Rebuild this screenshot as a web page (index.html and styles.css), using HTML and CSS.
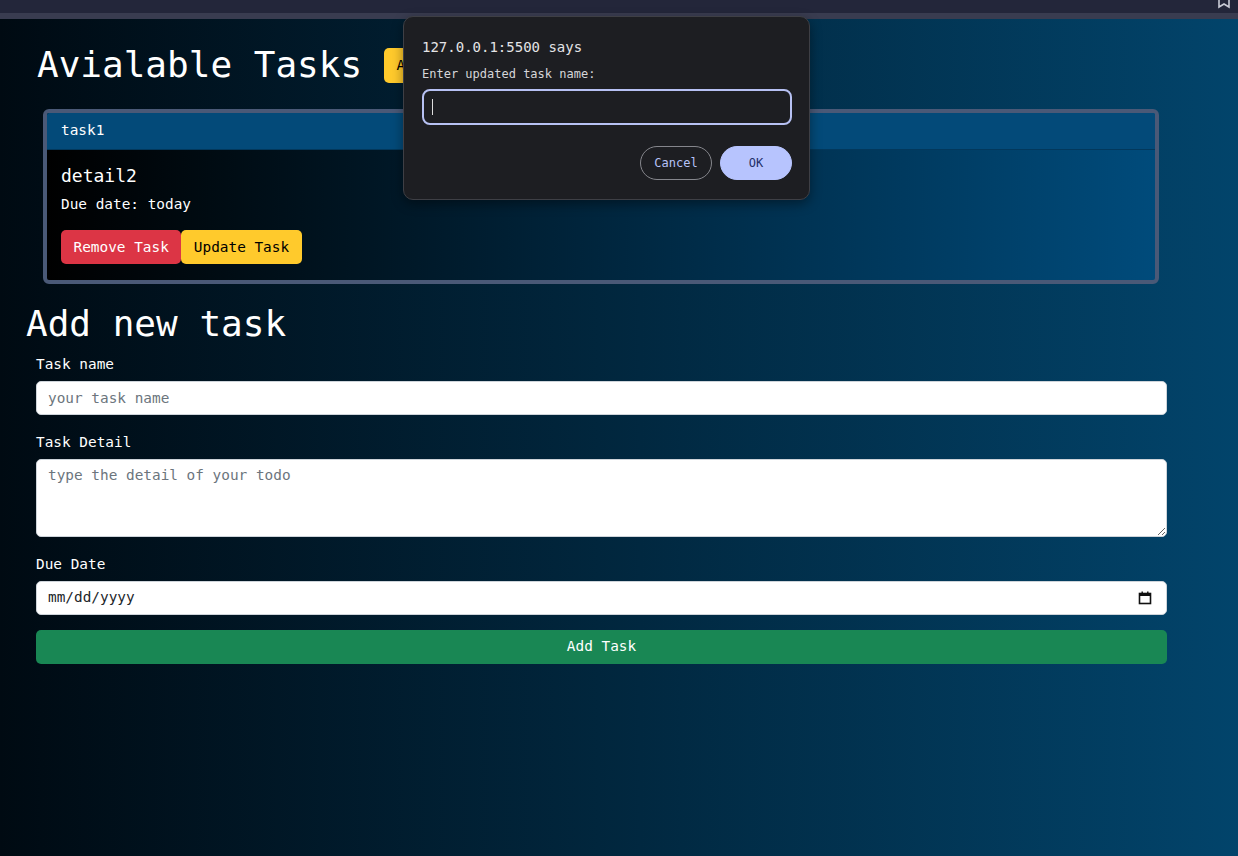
FILE: index.html
```html
<!DOCTYPE html>
<html lang="en">
<head>
<meta charset="utf-8">
<title>Todo</title>
<link rel="stylesheet" href="styles.css">
</head>
<body>
<div class="chrome">
  <div class="chrome-top">
    <svg class="star" width="14" height="12" viewBox="0 0 14 12"><path d="M2 0 L2 10 L7 7 L12 10 L12 0" fill="none" stroke="#c9cbd6" stroke-width="1.6"/></svg>
  </div>
  <div class="chrome-strip"></div>
</div>
<main class="page">
  <div class="title-row">
    <h1 class="title">Avialable Tasks</h1>
    <button class="btn btn-warning badge-btn">All Tasks</button>
  </div>

  <div class="task-card">
    <div class="task-header">task1</div>
    <div class="task-body">
      <h5 class="task-detail">detail2</h5>
      <p class="task-due">Due date: today</p>
      <div class="task-actions">
        <button class="btn btn-danger">Remove Task</button><button class="btn btn-warning">Update Task</button>
      </div>
    </div>
  </div>

  <h1 class="title form-title">Add new task</h1>
  <form class="task-form">
    <label class="label">Task name</label>
    <input class="field" type="text" placeholder="your task name">
    <label class="label">Task Detail</label>
    <textarea class="field area" placeholder="type the detail of your todo"></textarea>
    <label class="label">Due Date</label>
    <div class="field date-field">
      <span>mm/dd/yyyy</span>
      <svg width="14" height="14" viewBox="0 0 14 14"><rect x="1.5" y="2.5" width="11" height="10" fill="none" stroke="#111" stroke-width="1.6"/><rect x="1.5" y="2" width="11" height="3" fill="#111"/><rect x="3.5" y="0.5" width="1.4" height="2.5" fill="#111"/><rect x="9.1" y="0.5" width="1.4" height="2.5" fill="#111"/></svg>
    </div>
    <button type="button" class="btn btn-success add-btn">Add Task</button>
  </form>
</main>

<div class="dialog">
  <div class="dialog-title">127.0.0.1:5500 says</div>
  <div class="dialog-msg">Enter updated task name:</div>
  <div class="dialog-input"><span class="caret"></span></div>
  <div class="dialog-actions">
    <button class="dbtn dbtn-cancel">Cancel</button>
    <button class="dbtn dbtn-ok">OK</button>
  </div>
</div>
</body>
</html>
```

FILE: styles.css
```css
* { box-sizing: border-box; }
html, body { margin: 0; padding: 0; height: 100%; }
body {
  font-family: "DejaVu Sans Mono", "Liberation Mono", monospace;
  font-size: 14.4px;
  line-height: 1.5;
  color: #fff;
  background: linear-gradient(to right, #000a12, #02446b);
  position: relative;
  overflow: hidden;
}
.chrome { height: 19px; }
.chrome-top { height: 13px; background: #23263a; position: relative; }
.chrome-strip { height: 6px; background: #393c50; }
.star { position: absolute; right: 7px; top: -3px; }

.page { padding: 0; }
.title-row { display: flex; align-items: center; gap: 22px; padding-left: 37px; margin-top: 24px; }
.title { font-size: 36px; font-weight: 400; line-height: 1.2; margin: 0; letter-spacing: 0; }
.badge-btn { height: 35px; margin-top: 2px; }

.btn {
  font-family: inherit;
  font-size: 14.4px;
  line-height: 1.5;
  padding: 5.4px 11.5px;
  border: 1px solid transparent;
  border-radius: 5px;
  cursor: pointer;
}
.btn-danger { background: #dc3545; color: #fff; }
.btn-warning { background: #ffca2c; color: #000; }
.btn-success { background: #198754; color: #fff; }

.task-card {
  margin: 23px 0 0 43px;
  width: 1116px;
  border: 4px solid #4a5977;
  border-radius: 6px;
  overflow: hidden;
  background: linear-gradient(to right, #000, #004b7b);
}
.task-header {
  background: #034a79;
  padding: 7.2px 14px;
  border-bottom: 1px solid #02385c;
  height: 37px;
}
.task-body { padding: 14.5px 14px 16px; }
.task-detail { font-size: 18px; font-weight: 400; line-height: 1.2; margin: 0 0 8px; }
.task-due { margin: 0 0 14.5px; }
.task-actions { display: flex; }
.task-actions .btn { height: 34px; }

.form-title { margin: 18px 0 0 26px; }
.task-form { margin: 8px 0 0 36px; width: 1131px; display: flex; flex-direction: column; }
.label { display: block; margin-bottom: 5.5px; }
.field {
  font-family: inherit;
  font-size: 14.4px;
  line-height: 1.5;
  color: #212529;
  background: #fff;
  border: 1px solid #ced4da;
  border-radius: 5px;
  padding: 5.4px 11px;
  height: 34px;
  margin-bottom: 17.2px;
  width: 100%;
  outline: none;
}
.field::placeholder { color: #6c757d; }
.area { height: 78px; resize: vertical; margin-bottom: 17px; }
.date-field { display: flex; align-items: center; justify-content: space-between; padding-right: 14px; color: #212529; margin-bottom: 15px; }
.add-btn { width: 100%; height: 34px; margin-top: 0; }

.dialog {
  position: absolute;
  left: 403px;
  top: 16px;
  width: 407px;
  height: 184px;
  background: #1d1e22;
  border: 1px solid #3e3f45;
  border-radius: 10px;
  padding: 20px 17px 0 18px;
  font-family: "DejaVu Sans Mono", monospace;
  box-shadow: 0 4px 12px rgba(0,0,0,0.4);
}
.dialog-title { font-size: 14px; color: #e4e4e6; line-height: 20px; }
.dialog-msg { font-size: 12px; color: #d6d6d9; line-height: 16px; margin-top: 9px; }
.dialog-input {
  margin-top: 7px;
  height: 36px;
  border: 2px solid #b7c1f3;
  border-radius: 8px;
  background: #1d1e22;
  position: relative;
}
.caret { position: absolute; left: 8px; top: 8px; width: 1px; height: 16px; background: #ddd; }
.dialog-actions { display: flex; justify-content: flex-end; gap: 8px; margin-top: 21px; }
.dbtn {
  font-family: inherit;
  font-size: 12px;
  height: 34px;
  width: 72px;
  border-radius: 17px;
  cursor: pointer;
}
.dbtn-cancel { background: transparent; border: 1px solid #85868c; color: #b6c2f8; }
.dbtn-ok { background: #b7c4fe; border: 1px solid #b7c4fe; color: #243068; }
```
